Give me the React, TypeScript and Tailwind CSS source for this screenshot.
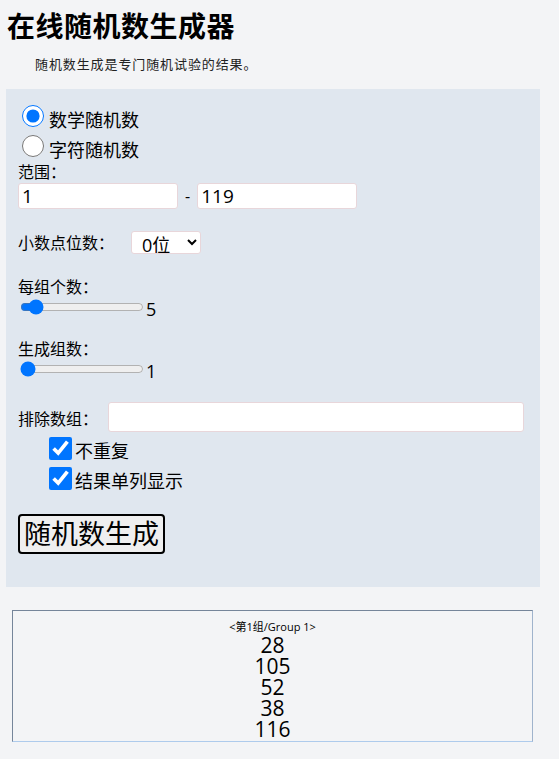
import { useState } from "react";

const font = "font-['Open_Sans','Noto_Sans_CJK_SC',sans-serif]";

const results = [28, 105, 52, 38, 116];

export default function App() {
	const [mode, setMode] = useState("num");
	const [count, setCount] = useState(5);
	const [groups, setGroups] = useState(1);
	const [unique, setUnique] = useState(true);
	const [column, setColumn] = useState(true);

	return (
		<div className={`min-h-[759px] bg-[#f3f4f6] text-black ${font}`}>
			<div className="pl-[7px] pr-[19px] pt-[6px]">
				<h1 className="text-[28px] leading-[40px] font-bold tracking-[0.5px]">在线随机数生成器</h1>
				<p className="pl-[28px] mt-[9px] text-[13px] leading-[18px] tracking-[0.9px] text-[#222]">随机数生成是专门随机试验的结果。</p>

				<div className="mt-[16px] ml-[-1px] bg-[#e0e7ef] pl-[12px] pt-[12px] pb-[33px] pr-[16px]">
					<label className="flex items-center h-[30px] text-[18px]">
						<input
							type="radio"
							name="mode"
							checked={mode === "num"}
							onChange={() => setMode("num")}
							className="w-[22px] h-[22px] ml-[4px] mr-[5px] accent-[#0075ff]"
						/>
						<span className="mt-[8px]">数学随机数</span>
					</label>
					<label className="flex items-center h-[30px] text-[18px]">
						<input
							type="radio"
							name="mode"
							checked={mode === "str"}
							onChange={() => setMode("str")}
							className="w-[22px] h-[22px] ml-[4px] mr-[5px] accent-[#0075ff]"
						/>
						<span className="mt-[8px]">字符随机数</span>
					</label>

					<div className="text-[16px] leading-[22px]">范围：</div>
					<div className="flex items-center gap-[8px]">
						<input
							defaultValue="1"
							className="w-[160px] h-[26px] bg-white border border-[#e8d6da] rounded-[3px] px-[3px] text-[19px] outline-none"
						/>
						<span className="text-[16px] mx-[-1px]">-</span>
						<input
							defaultValue="119"
							className="w-[160px] h-[26px] bg-white border border-[#e8d6da] rounded-[3px] px-[3px] text-[19px] outline-none"
						/>
					</div>

					<div className="flex items-center mt-[22px] h-[23px]">
						<span className="text-[16px]">小数点位数：</span>
						<select className="ml-[17px] w-[70px] h-[23px] bg-white border border-[#e8d6da] rounded-[3px] pl-[6px] text-[18px] leading-[20px]">
							<option>0位</option>
							<option>1位</option>
							<option>2位</option>
						</select>
					</div>

					<div className="mt-[22px] text-[16px] leading-[22px]">每组个数：</div>
					<div className="flex items-center h-[18px]">
						<input
							type="range"
							min={1}
							max={53}
							value={count}
							onChange={(e) => setCount(Number(e.target.value))}
							className="w-[124px] ml-[2px] accent-[#0075ff]"
						/>
						<span className="text-[18px] ml-[2px] mt-[4px]">{count}</span>
					</div>

					<div className="mt-[22px] text-[16px] leading-[22px]">生成组数：</div>
					<div className="flex items-center h-[18px]">
						<input
							type="range"
							min={1}
							max={20}
							value={groups}
							onChange={(e) => setGroups(Number(e.target.value))}
							className="w-[124px] ml-[2px] accent-[#0075ff]"
						/>
						<span className="text-[18px] ml-[2px] mt-[4px]">{groups}</span>
					</div>

					<div className="flex items-center mt-[24px] h-[30px]">
						<span className="text-[16px] mt-[4px]">排除数组：</span>
						<input className="ml-[10px] flex-1 h-[30px] bg-white border border-[#e8d6da] rounded-[3px] px-[3px] text-[18px] outline-none" />
					</div>

					<label className="flex items-center h-[30px] mt-[1px] pl-[31px] text-[18px]">
						<input
							type="checkbox"
							checked={unique}
							onChange={(e) => setUnique(e.target.checked)}
							className="w-[23px] h-[23px] mr-[3px] accent-[#0075ff]"
						/>
						<span className="mt-[6px]">不重复</span>
					</label>
					<label className="flex items-center h-[30px] pl-[31px] text-[18px]">
						<input
							type="checkbox"
							checked={column}
							onChange={(e) => setColumn(e.target.checked)}
							className="w-[23px] h-[23px] mr-[3px] accent-[#0075ff]"
						/>
						<span className="mt-[6px]">结果单列显示</span>
					</label>

					<button className="mt-[21px] h-[40px] px-[4px] border-2 border-black rounded-[4px] bg-[#efefef] text-[27px] leading-[32px]">
						随机数生成
					</button>
				</div>

				<div className="mt-[23px] ml-[5px] mr-[7px] border border-t-[#75859a] border-l-[#75859a] border-b-[#aecbec] border-r-[#9fb3cc] pt-[8px] pb-[1px] text-center">
					<div className="text-[11px] leading-[16px]">&lt;第1组/Group 1&gt;</div>
					{results.map((n) => (
						<div key={n} className="text-[21px] leading-[21px]">{n}</div>
					))}
				</div>
			</div>
		</div>
	);
}
